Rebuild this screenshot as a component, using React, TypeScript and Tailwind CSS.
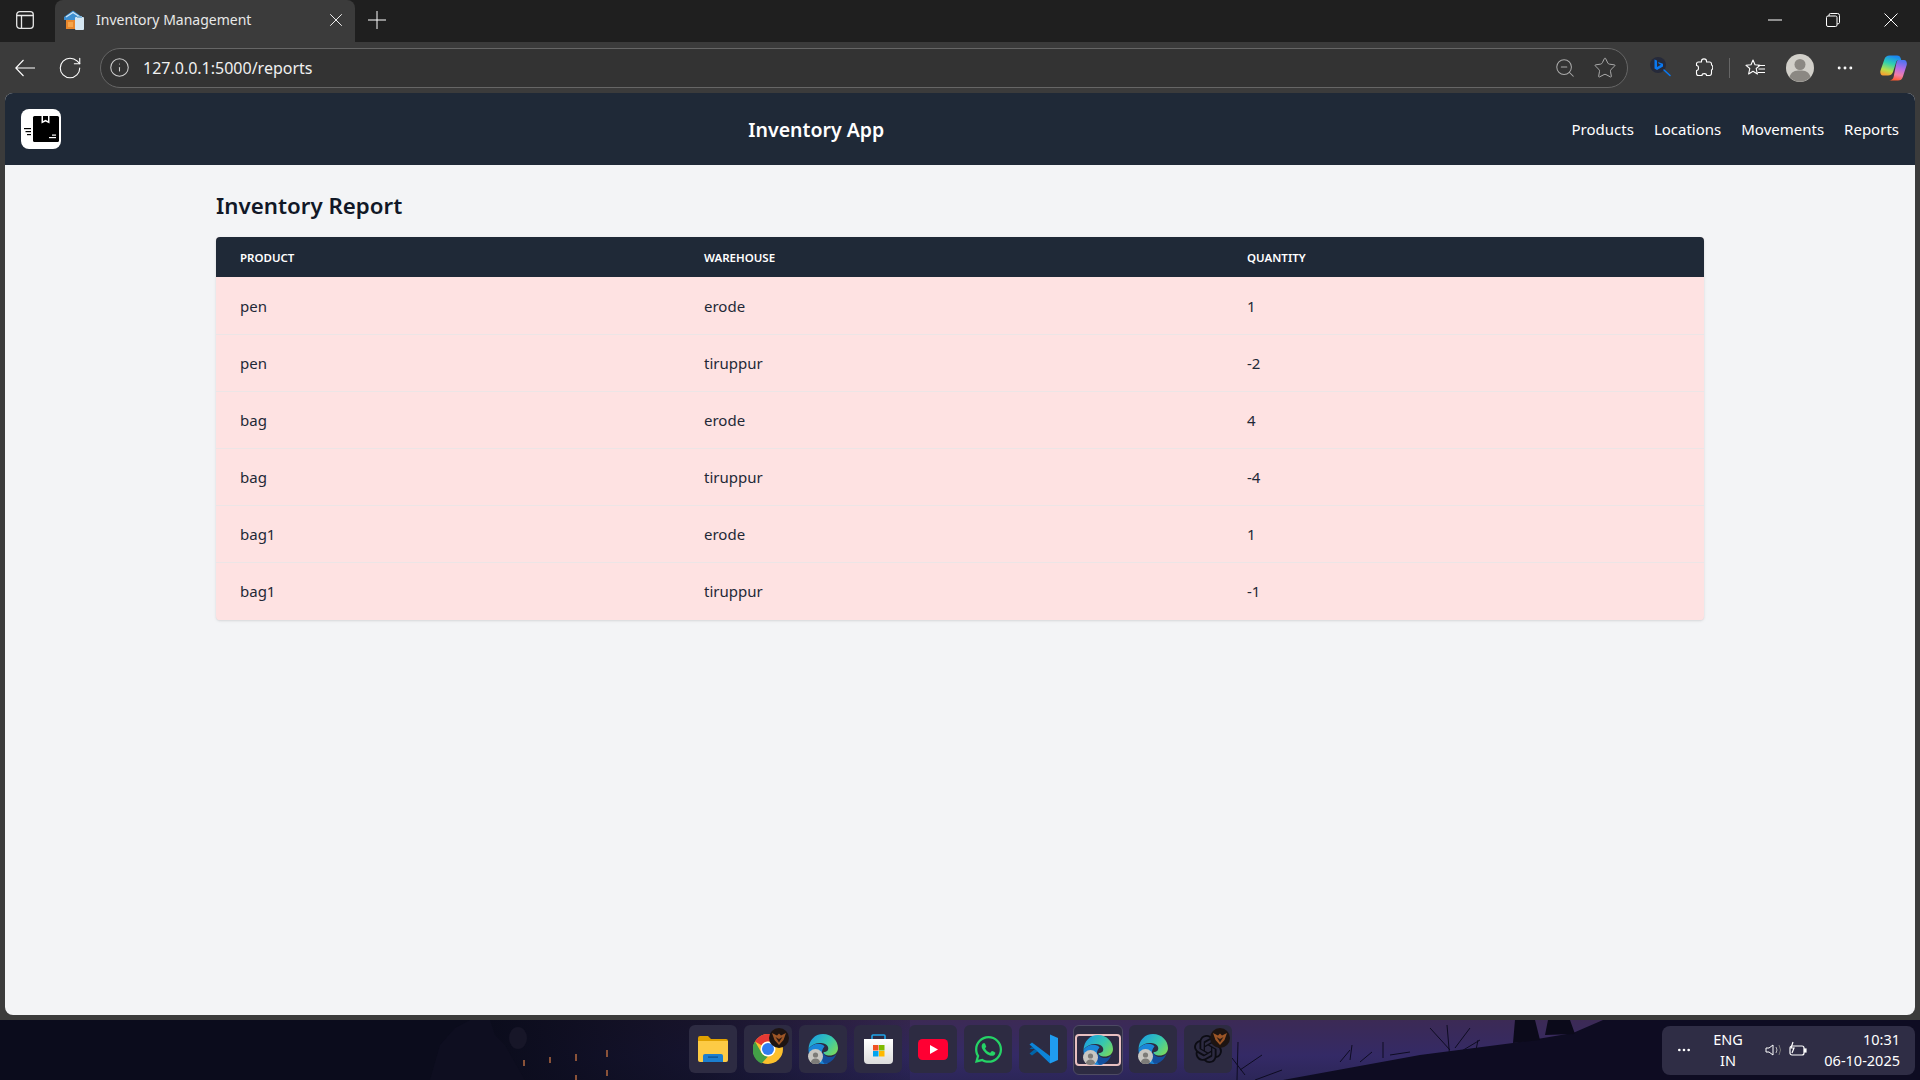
import { ReactNode } from "react";
import { RotateCw, Info, ZoomOut, Star, X, MoreHorizontal } from "lucide-react";
import { FaWhatsapp } from "react-icons/fa";
import { SiOpenai } from "react-icons/si";

const rows = [
  { product: "pen", warehouse: "erode", quantity: 1 },
  { product: "pen", warehouse: "tiruppur", quantity: -2 },
  { product: "bag", warehouse: "erode", quantity: 4 },
  { product: "bag", warehouse: "tiruppur", quantity: -4 },
  { product: "bag1", warehouse: "erode", quantity: 1 },
  { product: "bag1", warehouse: "tiruppur", quantity: -1 },
];

const navLinks = ["Products", "Locations", "Movements", "Reports"];

const Favicon = () => (
  <svg width="22" height="22" viewBox="0 0 22 22">
    <path d="M1 8 L10 1.5 L19 8 V11 H1 Z" fill="#3d8fd1" />
    <path d="M3 8 L10 3.5 L17 8" fill="none" stroke="#cfe6f7" strokeWidth="1.2" />
    <rect x="3" y="11" width="10" height="9" fill="#e8872c" />
    <rect x="5" y="13" width="5" height="5" fill="#f5a54a" />
    <rect x="12" y="8" width="9" height="13" rx="1" fill="#d5e6f2" />
    <rect x="14" y="7" width="5" height="2" fill="#7fb4d9" />
  </svg>
);

const BrandLogo = () => (
  <svg width="40" height="40" viewBox="0 0 40 40">
    <rect x="12" y="7" width="26" height="26" rx="1.5" fill="#000" />
    <path d="M20.5 7 h8 v7.5 l-4 -2 l-4 2 z" fill="#fff" />
    <path d="M22 7 h5 v5 l-2.5 -1.2 l-2.5 1.2 z" fill="#000" />
    <rect x="3" y="19" width="7" height="1.2" fill="#000" />
    <rect x="4.5" y="22" width="5.5" height="1.2" fill="#000" />
    <rect x="6" y="25" width="4" height="1.2" fill="#000" />
    <rect x="28" y="28" width="7" height="1.2" fill="#fff" />
    <rect x="31" y="25.5" width="4" height="1.2" fill="#fff" />
  </svg>
);

const BackIcon = () => (
  <svg width="20" height="20" viewBox="0 0 20 20" fill="none" stroke="#fff" strokeWidth="1.1">
    <path d="M0.5 10 H20 M8.5 2 L0.8 10 L8.5 18" />
  </svg>
);

const BingIcon = () => (
  <svg width="24" height="24" viewBox="0 0 24 24">
    <circle cx="9" cy="9" r="8" fill="#262a3a" />
    <path d="M5.5 3.5 L8 4.5 V11 L12 8.8 L9.8 7.8 L9 6 L14 7.7 V10.5 L8 14 L5.5 12.5 Z" fill="#0a78f0" />
    <path d="M15 14 L21 19.5" stroke="#0a78f0" strokeWidth="1.6" strokeLinecap="round" />
  </svg>
);

const ExtensionsIcon = () => (
  <svg width="18" height="19" viewBox="0 0 18 19" fill="none" stroke="#fff" strokeWidth="1.1" strokeLinejoin="round">
    <path d="M6.5 3 C6.5 0.2 11.5 0.2 11.5 3 V4 H14.5 Q16.5 4 16.5 6 V7 C18.2 7.5 18.2 11.5 16.5 12 V15 Q16.5 17.5 14.5 17.5 H11.5 C11.5 15 7 15 7 17.5 H3.5 Q1.5 17.5 1.5 15.5 V12.5 C4.2 12.5 4.2 7.5 1.5 7.5 V6 Q1.5 4 3.5 4 H6.5 Z" />
  </svg>
);

const FavoritesIcon = () => (
  <svg width="20" height="20" viewBox="0 0 20 20" fill="none" stroke="#fff" strokeWidth="1.1" strokeLinejoin="round">
    <path d="M8 2 L10 6.8 L15 7.3 L11.2 10.5 L12.4 16 L8 13.3 L3.6 16 L4.8 10.5 L1 7.3 L6 6.8 Z" />
    <path d="M13 7.5 H20 M13.5 11 H20 M13 14.5 H20" />
  </svg>
);

const ProfileIcon = () => (
  <svg width="28" height="28" viewBox="0 0 28 28">
    <circle cx="14" cy="14" r="14" fill="#d1cfc9" />
    <circle cx="14" cy="10.5" r="5.5" fill="#8b8883" />
    <path d="M3.5 23 C5 17.5 9 16.5 14 16.5 C19 16.5 23 17.5 24.5 23 A14 14 0 0 1 3.5 23 Z" fill="#8b8883" />
  </svg>
);

const CopilotIcon = () => (
  <svg width="27" height="26" viewBox="0 0 27 26">
    <defs>
      <linearGradient id="copA" x1="0.6" y1="0" x2="0.3" y2="1">
        <stop offset="0" stopColor="#1a86f5" />
        <stop offset="0.4" stopColor="#2fd0b0" />
        <stop offset="0.75" stopColor="#b8e04a" />
        <stop offset="1" stopColor="#f8a030" />
      </linearGradient>
      <linearGradient id="copB" x1="0.6" y1="0" x2="0.4" y2="1">
        <stop offset="0" stopColor="#4f74f0" />
        <stop offset="0.4" stopColor="#b56ce6" />
        <stop offset="0.72" stopColor="#f07fa8" />
        <stop offset="1" stopColor="#ff5a30" />
      </linearGradient>
    </defs>
    <path d="M18 5 H24 C26.3 5 27.3 7.5 26.7 10 L22.8 22 C22 24.5 20.5 25.5 18 25.5 H9 C11.5 25.5 13 24 13.6 22 L16 10 C16.4 8 17 5 18 5 Z" fill="url(#copB)" />
    <path d="M9.5 0.5 H17 C19.2 0.5 20.2 1.5 20.8 3.5 L21.2 5 H18.5 C17 5 16.4 6 16 7.5 L13 17 C12.2 19.5 10.5 20.5 8 20.5 H3 C0.8 20.5 -0.2 18 0.5 15.5 L4.5 4 C5.3 1.8 7 0.5 9.5 0.5 Z" fill="url(#copA)" />
  </svg>
);

const FolderIcon = () => (
  <svg width="30" height="28" viewBox="0 0 30 28">
    <path d="M0 3 Q0 1 2 1 H10 L13 4 H28 Q30 4 30 6 V9 H0 Z" fill="#e0a100" />
    <path d="M0 6 H30 V25 Q30 27 28 27 H2 Q0 27 0 25 Z" fill="#fdcb45" />
    <path d="M5 21 Q5 19 7 19 H23 Q25 19 25 21 V27 H5 Z" fill="#1c7fd0" />
    <rect x="10" y="21.5" width="10" height="1.2" fill="#0c4f8c" />
  </svg>
);

const ChromeIcon = () => (
  <svg width="30" height="30" viewBox="0 0 30 30">
    <circle cx="15" cy="15" r="15" fill="#fbc02d" />
    <path d="M15 0 A15 15 0 0 1 28 7.5 H15 A7.5 7.5 0 0 0 8.5 11.2 L2 7.5 A15 15 0 0 1 15 0 Z" fill="#e53935" />
    <path d="M2 7.5 L8.5 18.8 A7.5 7.5 0 0 0 15 22.5 L8.5 29.5 A15 15 0 0 1 2 7.5 Z" fill="#43a047" />
    <circle cx="15" cy="15" r="7.5" fill="#fff" />
    <circle cx="15" cy="15" r="6" fill="#2f7df0" />
  </svg>
);

const EdgeIcon = () => (
  <div className="relative h-[30px] w-[30px]">
    <svg width="30" height="30" viewBox="0 0 30 30">
      <defs>
        <linearGradient id="edgeA" x1="0" y1="0.2" x2="1" y2="0.8">
          <stop offset="0" stopColor="#1b9de2" />
          <stop offset="0.55" stopColor="#35c6b0" />
          <stop offset="1" stopColor="#7ad95c" />
        </linearGradient>
      </defs>
      <path d="M0.5 15 C1 6 7 0 15 0 C24 0 30 7 30 14 C30 19 26 21.5 21.5 21.5 C18 21.5 15.5 20 15.5 18 C19 18 21 16 20 13 C18 8 6 7 0.5 15 Z" fill="url(#edgeA)" />
      <path d="M0.5 15 C5 8.5 14 8.5 16.5 12.5 C12 17 13 26 20 29.5 C9 32 0 25 0.5 15 Z" fill="#1a86d8" />
      <path d="M15.5 18 C16 23 23 25.5 28.5 20 C26 26 21 30 16.5 29.8 C13 27 13 21 15.5 18 Z" fill="#14509f" />
    </svg>
    <div className="absolute bottom-0 left-0 flex h-[15px] w-[15px] items-end justify-center overflow-hidden rounded-full bg-[#c8c6c2]">
      <svg width="13" height="13" viewBox="0 0 13 13">
        <circle cx="6.5" cy="4" r="2.6" fill="#7d7b78" />
        <path d="M1.5 13 C2 8.5 4.5 7.5 6.5 7.5 C8.5 7.5 11 8.5 11.5 13 Z" fill="#7d7b78" />
      </svg>
    </div>
  </div>
);

const StoreIcon = () => (
  <svg width="29" height="30" viewBox="0 0 29 30">
    <defs>
      <linearGradient id="storeBag" x1="0" y1="0" x2="0" y2="1">
        <stop offset="0" stopColor="#ffffff" />
        <stop offset="1" stopColor="#dcdcdc" />
      </linearGradient>
    </defs>
    <path d="M8 6 V2 Q8 1 9 1 H20 Q21 1 21 2 V6" fill="none" stroke="#1fa5e8" strokeWidth="1.6" />
    <path d="M0 5 H29 V26 Q29 30 25 30 H4 Q0 30 0 26 Z" fill="url(#storeBag)" />
    <rect x="9" y="11" width="5.5" height="5.5" fill="#f05022" />
    <rect x="15" y="11" width="5.5" height="5.5" fill="#7fba00" />
    <rect x="9" y="17" width="5.5" height="5.5" fill="#00a4ef" />
    <rect x="15" y="17" width="5.5" height="5.5" fill="#ffb900" />
  </svg>
);

const YoutubeIcon = () => (
  <svg width="30" height="21" viewBox="0 0 30 21">
    <rect width="30" height="21" rx="4.5" fill="#ff0033" />
    <path d="M12 6 L20 10.5 L12 15 Z" fill="#fff" />
  </svg>
);

const VscodeIcon = () => (
  <svg width="29" height="30" viewBox="0 0 29 30">
    <path d="M21 0.5 L29 4 V26 L21 29.5 Z" fill="#1f9cf0" />
    <path d="M21 0.5 V8 L8.5 17.5 L3 13 L0.5 15 L6 15 L0.5 19.5 L3 21.5 L21 8 Z" fill="#0065a9" />
    <path d="M0.5 10.5 L3 8.5 L21 22 V29.5 L9 18 Z" fill="#0d84d8" />
  </svg>
);

const TaskTile = ({ children }: { children: ReactNode }) => (
  <div className="relative flex h-[48px] w-[48px] shrink-0 items-center justify-center rounded-md bg-[#2d2b42]">{children}</div>
);

const Badge = ({ className }: { className: string }) => (
  <div className={`absolute flex h-[20px] w-[20px] items-center justify-center rounded-full bg-[#1d1412] ${className}`}>
    <svg width="16" height="16" viewBox="0 0 16 16">
      <path d="M1 3 L6 5.5 L8 3.5 L10 5.5 L15 3 L12.5 10 L8 15 L3.5 10 Z" fill="#9c5526" />
      <path d="M4.5 7 L8 9 L11.5 7 L8 12.5 Z" fill="#2a1a14" />
    </svg>
  </div>
);

const Wallpaper = () => (
  <svg className="absolute inset-0" width="1920" height="60" viewBox="0 0 1920 60">
    <defs>
      <linearGradient id="sky" x1="0" y1="0" x2="0" y2="1">
        <stop offset="0" stopColor="#3c2a55" />
        <stop offset="0.6" stopColor="#342a66" />
        <stop offset="1" stopColor="#2c2658" />
      </linearGradient>
      <linearGradient id="leftFade" x1="0" y1="0" x2="1" y2="0">
        <stop offset="0" stopColor="#0b0c1c" stopOpacity="1" />
        <stop offset="0.5" stopColor="#0b0c1c" stopOpacity="0.75" />
        <stop offset="1" stopColor="#0b0c1c" stopOpacity="0.15" />
      </linearGradient>
    </defs>
    <rect width="1920" height="60" fill="url(#sky)" />
    <rect width="490" height="60" fill="#0b0c1c" />
    <rect x="490" width="420" height="60" fill="url(#leftFade)" />
    <path d="M430 60 L440 25 L455 8 L470 0 L490 0 L495 15 L505 25 L525 60 Z" fill="#0e0e20" />
    <ellipse cx="518" cy="18" rx="9" ry="11" fill="#171628" />
    <rect x="523" y="40" width="2" height="6" fill="#8a5238" />
    <rect x="549" y="37" width="2" height="6" fill="#8a5238" />
    <rect x="575" y="34" width="2" height="7" fill="#8a5238" />
    <rect x="606" y="30" width="2" height="7" fill="#8a5238" />
    <rect x="575" y="55" width="2" height="5" fill="#8a5238" />
    <rect x="606" y="50" width="2" height="6" fill="#8a5238" />
    <path d="M1283 60 L1420 35 L1513 23 L1573 13 L1603 0 L1920 0 V60 Z" fill="#0e0c22" />
    <path d="M1513 23 L1515 0 H1535 L1540 20 Z M1545 15 L1548 0 H1570 L1575 14 Z" fill="#0b0a1a" />
    <g stroke="#0e0c22" strokeWidth="1" fill="none">
      <path d="M1237 60 L1238 22 M1240 50 L1262 35 M1245 55 L1232 38 M1255 60 L1282 50" />
      <path d="M1350 40 L1352 25 M1383 38 L1383 22 M1340 42 L1350 30 M1390 35 L1410 32 M1360 42 L1372 32" />
      <path d="M1450 40 L1447 5 M1450 30 L1430 8 M1455 28 L1470 8 M1460 32 L1480 20 M1475 35 L1478 20" />
    </g>
  </svg>
);

const App = () => {
  return (
    <div className="flex h-screen w-full flex-col overflow-hidden bg-[#3b3b3b] font-['Noto_Sans',sans-serif]">
      {/* tab strip */}
      <div className="flex h-[42px] shrink-0 items-center bg-[#1f1f1f] text-white">
        <div className="flex h-full w-[55px] items-center pb-[2px] pl-[16px]">
          <svg width="18" height="18" viewBox="0 0 18 18" fill="none" stroke="#e6e6e6" strokeWidth="1.3">
            <rect x="0.7" y="0.7" width="16.6" height="16.6" rx="3" />
            <path d="M1 4.5 H17 M5.5 4.5 V17" />
          </svg>
        </div>
        <div className="flex h-full w-[300px] items-center rounded-t-lg bg-[#3b3b3b] pb-[3px] pl-[8px] pr-[8px]">
          <Favicon />
          <span className="ml-[11px] flex-1 text-[14px] text-[#e8e8e8]">Inventory Management</span>
          <X size={22} strokeWidth={1} />
        </div>
        <svg width="18" height="18" viewBox="0 0 18 18" stroke="#fff" strokeWidth="1" className="ml-[13px] mb-[2px]">
          <path d="M0 9 H18 M9 0 V18" />
        </svg>
        <div className="ml-auto flex items-center gap-[38px] pb-[2px] pr-[19px]">
          <div className="flex w-[20px] justify-center">
            <svg width="14" height="2" viewBox="0 0 14 2" stroke="#fff" strokeWidth="1">
              <path d="M0 1 H14" />
            </svg>
          </div>
          <div className="flex w-[20px] justify-center">
            <svg width="14" height="14" viewBox="0 0 14 14" fill="none" stroke="#fff" strokeWidth="1">
              <rect x="0.5" y="3" width="10.5" height="10.5" rx="1.5" />
              <path d="M3 3 V2 Q3 0.5 4.5 0.5 H11.5 Q13.5 0.5 13.5 2.5 V9.5 Q13.5 11 11 11" />
            </svg>
          </div>
          <div className="flex w-[20px] justify-center">
            <svg width="14" height="14" viewBox="0 0 14 14" stroke="#fff" strokeWidth="1">
              <path d="M0.5 0.5 L13.5 13.5 M13.5 0.5 L0.5 13.5" />
            </svg>
          </div>
        </div>
      </div>

      {/* toolbar */}
      <div className="flex h-[51px] shrink-0 items-center pl-[15px] text-white">
        <BackIcon />
        <RotateCw size={26} strokeWidth={1} className="ml-[22px]" />
        <div className="ml-[17px] flex h-[40px] w-[1528px] items-center rounded-full border border-[#666] bg-[#333] pl-[8px] pr-[10px]">
          <Info size={21} strokeWidth={1.2} className="text-[#cfcfcf]" />
          <span className="ml-[13px] flex-1 text-[16px] text-[#f0f0f0]">127.0.0.1:5000/reports</span>
          <ZoomOut size={22} strokeWidth={1.1} className="text-[#aaa]" />
          <Star size={24} strokeWidth={1} className="ml-[17px] text-[#aaa]" />
        </div>
        <div className="ml-[21px]">
          <BingIcon />
        </div>
        <div className="ml-[22px]">
          <ExtensionsIcon />
        </div>
        <div className="ml-[16px] h-[20px] w-px bg-[#666]" />
        <div className="ml-[15px]">
          <FavoritesIcon />
        </div>
        <div className="ml-[21px]">
          <ProfileIcon />
        </div>
        <MoreHorizontal size={20} strokeWidth={1.5} className="ml-[21px]" />
        <div className="ml-[25px]">
          <CopilotIcon />
        </div>
      </div>

      {/* page */}
      <div className="mx-[5px] flex min-h-0 flex-1 flex-col overflow-hidden rounded-lg bg-[#f3f4f6]">
        <nav className="flex h-[72px] shrink-0 items-center justify-between bg-[#1f2937] px-[16px] text-white">
          <div className="h-[40px] w-[40px] rounded-lg bg-white">
            <BrandLogo />
          </div>
          <h1 className="pt-[2px] text-[19.5px] font-semibold">Inventory App</h1>
          <div className="flex gap-[20px] pt-[1px] text-[15px]">
            {navLinks.map((link) => (
              <a key={link} href="#">
                {link}
              </a>
            ))}
          </div>
        </nav>
        <main className="mx-auto w-full max-w-[1536px] px-6 py-6">
          <h2 className="mb-4 h-[32px] text-[22.3px] font-semibold leading-[34px] text-[#111827]">Inventory Report</h2>
          <div className="overflow-hidden rounded bg-[#fee2e2] shadow">
            <table className="w-full table-fixed text-left">
              <thead className="bg-[#1f2937] text-[11.5px] uppercase text-white">
                <tr className="h-[40px]">
                  <th className="w-[464px] pl-6 pt-[1px] font-semibold">Product</th>
                  <th className="w-[543px] pl-6 pt-[1px] font-semibold">Warehouse</th>
                  <th className="pl-6 pt-[1px] font-semibold">Quantity</th>
                </tr>
              </thead>
              <tbody className="text-[15px] text-[#1f2937]">
                {rows.map((row, index) => (
                  <tr key={index} className="h-[57px] border-b border-[#ece5e6] last:border-b-[#fee2e2]">
                    <td className="pl-6 pt-[2px]">{row.product}</td>
                    <td className="pl-6 pt-[2px]">{row.warehouse}</td>
                    <td className="pl-6 pt-[2px]">{row.quantity}</td>
                  </tr>
                ))}
              </tbody>
            </table>
          </div>
        </main>
      </div>
      <div className="h-[5px] shrink-0" />

      {/* taskbar */}
      <div className="relative flex h-[60px] shrink-0 items-center bg-[#0b0c1c]">
        <Wallpaper />
        <div className="relative ml-[689px] flex gap-[7px]">
          <TaskTile>
            <FolderIcon />
          </TaskTile>
          <TaskTile>
            <ChromeIcon />
            <Badge className="right-[3px] top-[3px]" />
          </TaskTile>
          <TaskTile>
            <EdgeIcon />
          </TaskTile>
          <TaskTile>
            <StoreIcon />
          </TaskTile>
          <TaskTile>
            <YoutubeIcon />
          </TaskTile>
          <TaskTile>
            <FaWhatsapp size={31} className="text-[#25d366]" />
          </TaskTile>
          <TaskTile>
            <VscodeIcon />
          </TaskTile>
          <div className="mx-[-1px] flex h-[50px] w-[50px] shrink-0 items-center justify-center rounded-md border border-[#4d4a63] bg-[#2d2b42]">
            <div className="flex h-[32px] w-[46px] items-center justify-center rounded-[4px] border-2 border-[#e8c0c0]">
              <EdgeIcon />
            </div>
          </div>
          <TaskTile>
            <EdgeIcon />
          </TaskTile>
          <TaskTile>
            <SiOpenai size={28} className="text-[#0c0c14]" />
            <Badge className="right-[2px] top-[3px]" />
          </TaskTile>
        </div>
        <div className="relative ml-auto mr-[5px] flex h-[49px] w-[253px] items-center rounded-lg bg-[#2f2d45] text-[14.5px] text-white">
          <MoreHorizontal size={16} className="ml-[14px]" />
          <div className="ml-[18px] w-[36px] text-center leading-[21px]">
            ENG
            <br />
            IN
          </div>
          <svg width="20" height="20" viewBox="0 0 20 20" fill="none" stroke="#fff" strokeWidth="1" className="ml-[18px]">
            <path d="M2 8 H5 L9 5 V15 L5 12 H2 Z" />
            <path d="M12 7 Q14 10 12 13" stroke="#bbb" />
            <path d="M15 5 Q18 10 15 15" stroke="#777" />
          </svg>
          <svg width="19" height="18" viewBox="0 0 19 18" fill="none" stroke="#fff" strokeWidth="1.2" className="ml-[4px]">
            <rect x="2" y="5" width="14" height="9" rx="2" />
            <rect x="16.5" y="8" width="1.5" height="3" fill="#fff" />
            <path d="M5 1 L3 7 H6 L4 12" />
          </svg>
          <div className="ml-auto mr-[15px] text-right leading-[21px]">
            10:31
            <br />
            06-10-2025
          </div>
        </div>
      </div>
    </div>
  );
};

export default App;
